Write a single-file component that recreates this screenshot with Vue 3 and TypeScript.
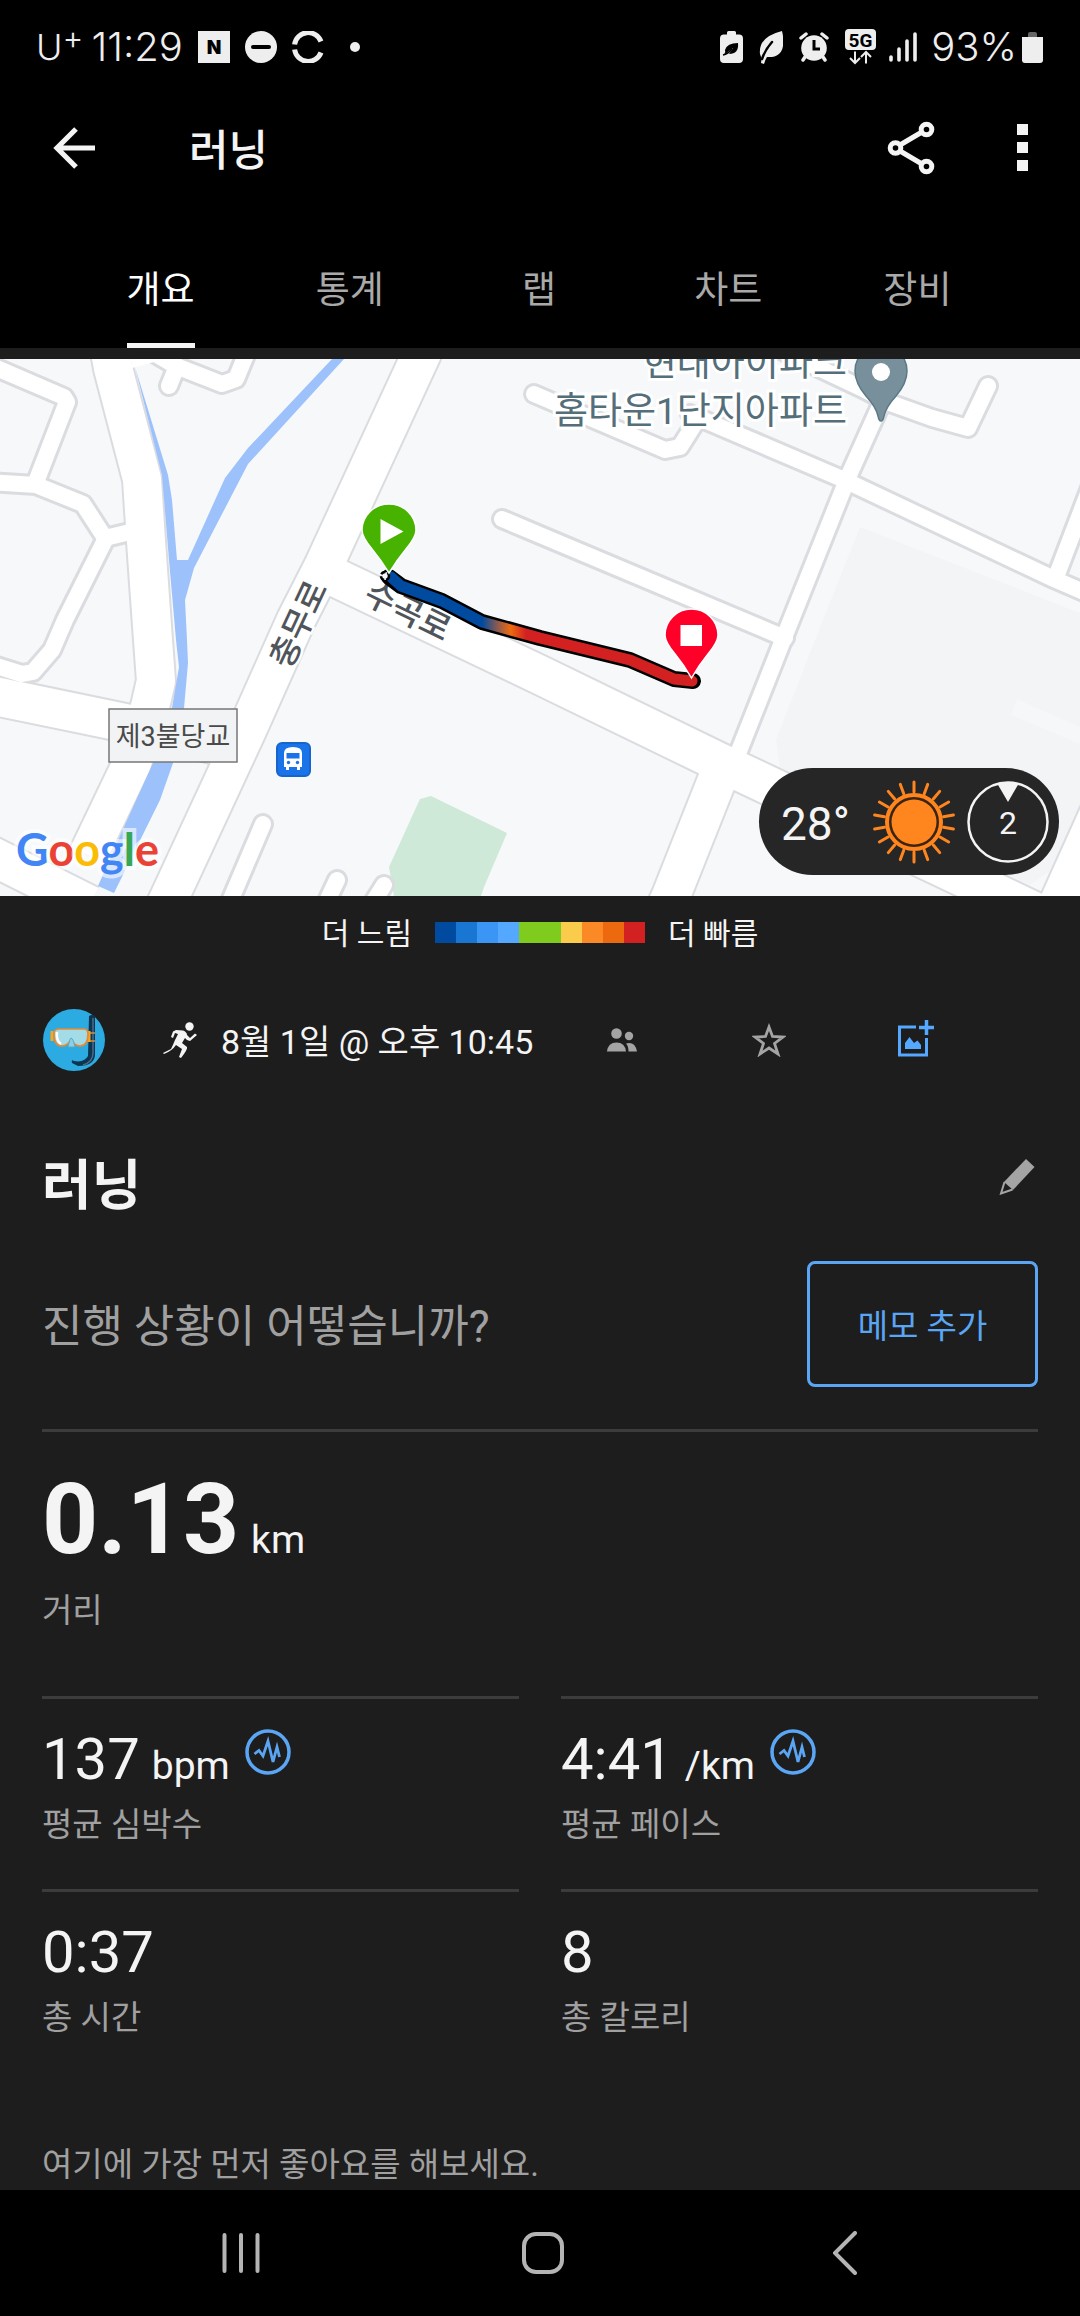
<script setup lang="ts">
import { ref } from 'vue'

interface Metric {
  value: string
  unit?: string
  label: string
  hasZones?: boolean
}

const tabs: string[] = ['개요', '통계', '랩', '차트', '장비']
const activeTab = ref<string>('개요')

const speedColors: string[] = [
  '#004a9f', '#1976d2', '#3b95f5', '#54a8ff', '#80cc1e',
  '#80cc1e', '#fbcb4b', '#fb8a26', '#ec690f', '#d32121',
]

const metrics: Metric[] = [
  { value: '137', unit: 'bpm', label: '평균 심박수', hasZones: true },
  { value: '4:41', unit: '/km', label: '평균 페이스', hasZones: true },
  { value: '0:37', label: '총 시간' },
  { value: '8', label: '총 칼로리' },
]

const sunRays: number[] = Array.from({ length: 18 }, (_, i) => i * 20)

const wideRoads: string[] = [
  'M107 335L113 368L142 479L146 541L153 640L156 681L150 707L132 763L88 855',
  'M-10 695L140 726L228 748',
  'M428 340L324 565L296 620L247 730L170 896L160 917',
  'M324 572L540 675L717 761L1000 895L1040 914',
  'M721 770L671 896L661 918',
  'M-20 850L0 860L90 905',
  'M1055 911L1100 811',
]

const narrowRoads: string[] = [
  'M737 756L783 640L849 475L885 395',
  'M770 345L861 388L890 403L932 418L968 428L988 386',
  'M534 394L665 450L680 447L697 420',
  'M690 414L840 478L1056 580L1100 599',
  'M1056 577L1092 483',
  'M502 519L540 535L785 638',
  'M-8 366L64 397L67 402L36 482',
  'M-10 482L36 485L83 504L105 538L130 532',
  'M105 540L65 620L52 650L33 672L22 674L-10 664',
  'M140 345L176 366L222 384L236 379L248 350',
  'M177 366L169 386',
  'M263 824L228 906',
  'M337 880L320 916',
  'M384 885L362 920',
]
</script>

<template>
  <div class="screen">
    <div class="status-bar">
      <div class="status-group">
        <span class="carrier">U<span class="carrier-plus">+</span></span>
        <span class="clock">11:29</span>
        <svg class="status-n" width="32" height="32" viewBox="0 0 32 32" aria-hidden="true">
          <rect width="32" height="32" fill="#eee" />
          <text x="16" y="23" text-anchor="middle" class="n-mark">N</text>
        </svg>
        <svg class="status-icon" width="32" height="32" viewBox="0 0 32 32" aria-hidden="true">
          <circle cx="16" cy="16" r="16" fill="#eee" />
          <path d="M8 16H24" stroke="#000" stroke-width="4" stroke-linecap="round" />
        </svg>
        <svg class="status-icon" width="32" height="32" viewBox="0 0 32 32" fill="none" stroke="#eee" stroke-width="5" aria-hidden="true">
          <path d="M2.6 13.5A13.7 13.7 0 0 1 29 10.5" />
          <path d="M2.6 18.5A13.7 13.7 0 0 0 29 21.5" />
        </svg>
        <span class="status-dot"></span>
      </div>
      <div class="status-group">
        <svg width="23" height="32" viewBox="0 0 23 32" aria-hidden="true">
          <path d="M7 1.500Q7 0 8.500 0H14.500Q16 0 16 1.500V3.500H19Q23 3.500 23 7.500V28Q23 32 19 32H4Q0 32 0 28V7.500Q0 3.500 4 3.500H7Z" fill="#eee" />
          <path d="M5 19Q7 12 18 12Q19 23 9 23L13 17L4 24Q6 21 5 19Z" fill="#000" />
          <path d="M3 24Q8 23 12 18" stroke="#000" stroke-width="1.500" fill="none" />
        </svg>
        <svg class="leaf" width="24" height="33" viewBox="0 0 24 33" aria-hidden="true">
          <path d="M23 0Q25 8 24 15Q22 27 8 26Q6 29 5 33L2 32Q3 27 1 23Q-1 6 23 0Z" fill="#eee" />
          <path d="M3 28Q6 19 13 11" stroke="#000" stroke-width="2.500" stroke-linecap="round" fill="none" />
        </svg>
        <svg class="alarm" width="30" height="30" viewBox="0 0 30 30" aria-hidden="true">
          <circle cx="15" cy="16" r="12.800" fill="#eee" />
          <path d="M2 6L7 2M28 6L23 2M6 25L4 28M24 25L26 28" stroke="#eee" stroke-width="3.500" stroke-linecap="round" />
          <path d="M15 8V17H21" stroke="#000" stroke-width="3" fill="none" />
        </svg>
        <svg class="five-g" width="31" height="36" viewBox="0 0 31 36" aria-hidden="true">
          <rect width="31" height="21" rx="4" fill="#eee" />
          <text x="15.500" y="17.500" text-anchor="middle" class="five-g-mark">5G</text>
          <path d="M10 22.500V34M5 29L10 34L15 29M21 34.500V23M16 28L21 23L26 28" stroke="#eee" stroke-width="2" fill="none" />
        </svg>
        <svg class="signal" width="29" height="30" viewBox="0 0 29 30" stroke="#eee" stroke-width="3.600" stroke-linecap="round" aria-hidden="true">
          <path d="M2 25V28M10 17V28M18 9V28M26 2V28" />
        </svg>
        <span class="battery-text">93%</span>
        <svg class="battery" width="21" height="31" viewBox="0 0 21 31" aria-hidden="true">
          <path d="M6 5V2Q6 0 8 0H13Q15 0 15 2V5Z" fill="#666" />
          <path d="M0 5H21V28Q21 31 18 31H3Q0 31 0 28Z" fill="#eee" />
        </svg>
      </div>
    </div>

    <header class="app-bar">
      <button class="icon-button" aria-label="뒤로">
        <svg width="42" height="42" viewBox="0 0 42 42" fill="none" stroke="#f4f4f4" stroke-width="5.200" aria-hidden="true">
          <path d="M42 21H4M23 2L4 21L23 40" />
        </svg>
      </button>
      <h1 class="app-title">러닝</h1>
      <button class="icon-button share-button" aria-label="공유">
        <svg width="48" height="54" viewBox="0 0 48 54" fill="none" stroke="#f4f4f4" stroke-width="5" aria-hidden="true">
          <circle cx="8.500" cy="27" r="5.300" />
          <circle cx="39.500" cy="8.500" r="5.300" />
          <circle cx="39.500" cy="45.500" r="5.300" />
          <path d="M13 24L35 11M13 30L35 43" />
        </svg>
      </button>
      <button class="icon-button" aria-label="더보기">
        <svg width="11" height="48" viewBox="0 0 11 48" fill="#f4f4f4" aria-hidden="true">
          <path d="M0 0H11V11H0ZM0 18H11V29H0ZM0 36H11V47H0Z" />
        </svg>
      </button>
    </header>

    <nav class="tabs">
      <button
        v-for="tab in tabs"
        :key="tab"
        class="tab"
        :class="{ active: tab === activeTab }"
        @click="activeTab = tab"
      >
        <span class="tab-label">{{ tab }}</span>
      </button>
    </nav>

    <main class="content">
      <section class="map">
        <svg class="map-canvas" viewBox="0 359 1080 537" role="img" aria-label="러닝 경로 지도">
          <defs>
            <linearGradient id="pace" gradientUnits="userSpaceOnUse" x1="482" y1="0" x2="526" y2="0">
              <stop offset="0" stop-color="#004a9f" />
              <stop offset="0.350" stop-color="#8a5a50" />
              <stop offset="0.650" stop-color="#ee6a10" />
              <stop offset="1" stop-color="#d32121" />
            </linearGradient>
          </defs>
          <rect x="0" y="359" width="1080" height="537" fill="#f6f8fa" />
          <path d="M860 527L1080 613V850L1030 885L780 768L776 740L815 640Z" fill="#f3f4f6" />
          <path d="M1017 699L1080 727V744L1011 715Z" fill="#f6f7f9" />
          <path d="M420 799L431 796L507 833L484 887L481 896H394L389 867Z" fill="#cee9d8" />

          <g fill="none" stroke="#dadce0" stroke-linejoin="round">
            <path v-for="d in wideRoads" :key="d" :d="d" stroke-width="42" />
            <path v-for="d in narrowRoads" :key="d" :d="d" stroke-width="22" stroke-linecap="round" />
          </g>
          <g fill="none" stroke="#fff" stroke-linejoin="round">
            <path v-for="d in wideRoads" :key="d" :d="d" stroke-width="38" />
            <path v-for="d in narrowRoads" :key="d" :d="d" stroke-width="16" stroke-linecap="round" />
          </g>
          <path d="M126 330L170 345L154 362L132 368Z" fill="#fff" />

          <path
            d="M135 367L162 475L169 560L176 640L179 667L172 708L153 763L124 827L98 886L114 893L160 800L173 763L184 708L188 663L187 640L185 600L194 568L248 464L344 359H332L248 448L225 478L188 560H177L172 500L168 475Z"
            fill="#9dc1fb"
          />

          <g class="road-name">
            <text transform="translate(298 624) rotate(-65)" text-anchor="middle" dy="12">충무로</text>
            <text transform="translate(408 611) rotate(26)" text-anchor="middle" dy="12">수곡로</text>
          </g>

          <g fill="none" stroke-linejoin="round">
            <path d="M389 577L401 586L442 601L482 622L540 638L630 660L674 679L693 681" stroke="#000" stroke-width="16" stroke-linecap="round" />
            <path d="M391 577L401 586L442 601L482 622L540 638L630 660L674 679L692 681" stroke="url(#pace)" stroke-width="11" stroke-linecap="round" />
            <circle cx="385" cy="576" r="4" stroke="#000" stroke-width="2.500" stroke-dasharray="5 2" fill="#f6f8fa" />
          </g>

          <g class="place-name">
            <text x="847" y="376" text-anchor="end">현대아이파크</text>
            <text x="847" y="424" text-anchor="end">홈타운1단지아파트</text>
          </g>
          <path d="M881 421Q879 421 878 416Q876 407 866 396Q855 383 855 371A26 26 0 0 1 907 371Q907 383 896 396Q886 407 884 416Q883 421 881 421Z" fill="#78909c" stroke="#5c7886" stroke-width="1.500" />
          <circle cx="881" cy="372" r="9" fill="#fff" />

          <path d="M389 573Q381 560 372 549Q362 537 362 530A27 26 0 0 1 416 530Q416 537 406 549Q397 560 389 573Z" fill="#48b200" stroke="#fff" stroke-width="1.500" />
          <path d="M380.500 519L403.500 531.500L380.500 544Z" fill="#fff" />
          <path d="M691.500 678Q684 665 675 654Q665 642 665 635A26.500 26 0 0 1 718 635Q718 642 708 654Q699 665 691.500 678Z" fill="#ff0029" stroke="#fff" stroke-width="1.500" />
          <rect x="680.500" y="625" width="21.500" height="21" fill="#fff" />

          <rect x="109" y="709" width="128" height="53" fill="#f1f3f5" stroke="#777" stroke-width="1.500" />
          <text x="173" y="746" text-anchor="middle" class="bridge-name">제3불당교</text>

          <rect x="277" y="743" width="33" height="33" rx="5" fill="#1a73e8" stroke="#1765cc" stroke-width="2" />
          <path d="M284 753Q284 747 293 747Q302 747 302 753V767H300V770H297V767H289V770H286V767H284Z" fill="#fff" />
          <path d="M286.500 753H299.500V758.500H286.500Z" fill="#1a73e8" />
          <circle cx="288.500" cy="762.500" r="1.700" fill="#1a73e8" />
          <circle cx="297.500" cy="762.500" r="1.700" fill="#1a73e8" />

          <text x="16" y="866" class="map-brand"><tspan fill="#4285f4">G</tspan><tspan fill="#ea4335">o</tspan><tspan fill="#fbbc05">o</tspan><tspan fill="#4285f4">g</tspan><tspan fill="#34a853">l</tspan><tspan fill="#ea4335">e</tspan></text>
        </svg>

        <div class="weather">
          <span class="temperature">28°</span>
          <svg class="sun" width="84" height="86" viewBox="-42 -43 84 86" aria-hidden="true">
            <g stroke="#ff861f" stroke-width="3" stroke-linecap="round">
              <path v-for="angle in sunRays" :key="angle" d="M0 -30V-40" :transform="`rotate(${angle})`" />
            </g>
            <circle r="27" fill="#3b2410" stroke="#ff861f" stroke-width="4" />
            <circle r="22.500" fill="#ff861f" />
          </svg>
          <svg width="82" height="82" viewBox="-41 -41 82 82" aria-hidden="true">
            <circle r="39.500" fill="none" stroke="#f4f4f4" stroke-width="2.500" />
            <path d="M-10.500 -38Q0 -41 10.500 -38L0 -20Z" fill="#f4f4f4" />
            <text y="12" text-anchor="middle" class="wind-speed">2</text>
          </svg>
        </div>
      </section>

      <div class="legend">
        <span class="legend-text">더 느림</span>
        <div class="legend-scale">
          <span v-for="(color, i) in speedColors" :key="i" class="legend-step" :style="{ background: color }"></span>
        </div>
        <span class="legend-text">더 빠름</span>
      </div>

      <div class="activity-meta">
        <svg class="avatar" width="64" height="64" viewBox="0 0 64 64" aria-hidden="true">
          <circle cx="32" cy="32" r="31" fill="#2cabe2" />
          <path d="M47 8Q50 6 53 8V46Q53 58 36 58L30 55Q29 51 32 53Q42 55 46 48Z" fill="#0d3552" />
          <path d="M51 10V45Q51 54 41 57" stroke="#4c6b85" stroke-width="1.500" fill="none" />
          <path d="M46 25H53M46 33H53" stroke="#d98c38" stroke-width="1.500" />
          <path d="M10 23V33M47 23V34" stroke="#f6a823" stroke-width="3" />
          <path d="M17 21H42Q46 21 46 26Q46 38 38 38Q33 38 29 32Q25 38 20 38Q12 38 12 26Q12 21 17 21Z" fill="#a3dbe6" stroke="#e48a36" stroke-width="1.700" />
          <path d="M15 24Q14 33 19 36" stroke="#fff" stroke-width="2.500" fill="none" />
          <path d="M26 39Q28 30 29 30Q31 30 33 39Z" fill="#8ed0df" stroke="#55a9cc" />
        </svg>
        <svg class="runner" width="34" height="36" viewBox="0 0 34 36" aria-hidden="true">
          <circle cx="26.500" cy="4.500" r="4.200" fill="#f4f4f4" />
          <path d="M13 8L20 8.500Q24 10 24 13L27 16L32 11.500L34 13L27 19Q24 19 22 16L19 21L24 25Q25 27 18 36L16 35L19 27L13 23Q9 29 1 32L0 31L8 27Q10 23 12 18L15 12L12 11L10 16L8 15L10 9.500Z" fill="#f4f4f4" />
        </svg>
        <time class="date">8월 1일 @ 오후 10:45</time>
        <button class="meta-button" aria-label="공개 범위">
          <svg width="30" height="24" viewBox="0 0 30 24" fill="#a4a4a4" aria-hidden="true">
            <circle cx="9.500" cy="5.500" r="5.300" />
            <circle cx="22" cy="8" r="4.200" />
            <path d="M0 23.500Q1 14.500 9.500 14.500Q18 14.500 19 23.500Z" />
            <path d="M19 15.500Q28 13 30 23.500H21.500Q21.500 18 19 15.500Z" />
          </svg>
        </button>
        <button class="meta-button" aria-label="즐겨찾기">
          <svg width="34" height="34" viewBox="0 0 34 34" aria-hidden="true">
            <path d="M17 4L20.500 13.500L31 14L22.500 20.500L26 31L17 25L8 31L11.500 20.500L3 14L13.500 13.500Z" fill="none" stroke="#a4a4a4" stroke-width="2.800" />
          </svg>
        </button>
        <button class="meta-button photo-button" aria-label="사진 추가">
          <svg width="36" height="37" viewBox="0 0 36 37" fill="none" stroke="#54a8ff" aria-hidden="true">
            <path d="M18 7H1.500V35H28.500V18" stroke-width="3" />
            <path d="M28.500 0V15M21 7.500H36" stroke-width="3.500" />
            <path d="M7 29V23L11.500 17L16 23L19.500 20.500L23 25V29Z" fill="#54a8ff" stroke="none" />
          </svg>
        </button>
      </div>

      <div class="padded">
        <div class="title-row">
          <h2 class="activity-title">러닝</h2>
          <button class="edit-button" aria-label="제목 편집">
            <svg width="36" height="36" viewBox="0 0 36 36" aria-hidden="true">
              <path d="M27 0L35.500 8L14 31L5 23Z" fill="#a4a4a4" />
              <path d="M5.500 23L2 34.500L13.500 30.500" fill="none" stroke="#a4a4a4" stroke-width="2" />
            </svg>
          </button>
        </div>

        <div class="memo-row">
          <p class="memo-prompt">진행 상황이 어떻습니까?</p>
          <button class="memo-button">메모 추가</button>
        </div>

        <section class="distance">
          <div class="reading">
            <span class="distance-value">0.13</span>
            <span class="unit">km</span>
          </div>
          <div class="caption distance-caption">거리</div>
        </section>

        <section class="metrics">
          <div v-for="metric in metrics" :key="metric.label" class="metric">
            <div class="reading">
              <span class="metric-value">{{ metric.value }}</span>
              <span v-if="metric.unit" class="unit">{{ metric.unit }}</span>
              <svg v-if="metric.hasZones" class="zones" width="46" height="46" viewBox="0 0 46 46" fill="none" stroke="#5aa6f5" aria-hidden="true">
                <circle cx="23" cy="23" r="21" stroke-width="3.500" />
                <path d="M9.500 25L14 21.500L18 27L23 12L28 33L32 18L34.500 28" stroke-width="2.800" />
              </svg>
            </div>
            <div class="caption">{{ metric.label }}</div>
          </div>
        </section>

        <p class="likes">여기에 가장 먼저 좋아요를 해보세요.</p>
      </div>
    </main>

    <nav class="system-nav">
      <button aria-label="최근 앱">
        <svg width="40" height="42" viewBox="0 0 40 42" stroke="#b4b4b4" stroke-width="4" stroke-linecap="round" aria-hidden="true">
          <path d="M3.500 3V39M20 3V39M36.500 3V39" />
        </svg>
      </button>
      <button aria-label="홈">
        <svg width="42" height="42" viewBox="0 0 42 42" fill="none" stroke="#b4b4b4" stroke-width="4" aria-hidden="true">
          <rect x="2" y="2" width="38" height="38" rx="12" />
        </svg>
      </button>
      <button aria-label="이전">
        <svg width="24" height="44" viewBox="0 0 24 44" fill="none" stroke="#b4b4b4" stroke-width="4" stroke-linecap="round" aria-hidden="true">
          <path d="M22 2L2 22L22 42" />
        </svg>
      </button>
    </nav>
  </div>
</template>

<style>
body {
  margin: 0;
  background: #000;
}
</style>

<style scoped>
.screen {
  display: flex;
  flex-direction: column;
  min-height: 100vh;
  background: #000;
  color: #f4f4f4;
  font-family: Roboto, "Noto Sans CJK KR", sans-serif;
}

.screen svg {
  display: block;
  flex: none;
}

button {
  margin: 0;
  padding: 0;
  border: 0;
  background: none;
  color: inherit;
  font: inherit;
  cursor: pointer;
}

h1,
h2,
p {
  margin: 0;
}

.status-bar {
  display: flex;
  align-items: center;
  justify-content: space-between;
  height: 94px;
  padding: 0 37px 0 36px;
  color: #eee;
  font-family: Inter, sans-serif;
}

.status-group {
  display: flex;
  align-items: center;
}

.carrier {
  display: flex;
  font-size: 36px;
  font-weight: 300;
  line-height: 46px;
}

.carrier-plus {
  font-size: 32px;
  line-height: 28px;
}

.clock,
.battery-text {
  font-size: 40px;
  font-weight: 300;
  line-height: 44px;
}

.clock {
  margin-left: 8px;
}

.status-n,
.status-icon {
  margin-left: 15px;
}

.n-mark {
  font: 900 19px Inter, sans-serif;
}

.status-dot {
  width: 10px;
  height: 10px;
  margin-left: 26px;
  border-radius: 50%;
  background: #eee;
}

.leaf,
.alarm,
.five-g {
  margin-left: 16px;
}

.five-g-mark {
  font: 700 19px Roboto, sans-serif;
}

.signal {
  margin: 0 13px;
}

.battery {
  margin-left: 5px;
}

.app-bar {
  display: flex;
  align-items: center;
  height: 108px;
  padding: 0 52px 26px 53px;
}

.app-title {
  flex: 1;
  margin-left: 94px;
  padding-top: 6px;
  font-size: 43px;
  font-weight: 500;
  line-height: 52px;
}

.share-button {
  margin-right: 82px;
}

.tabs {
  display: flex;
  padding: 0 68px 0 66px;
}

.tab {
  display: flex;
  flex: 1;
  justify-content: center;
  color: #a9a9a9;
  font-size: 37px;
}

.tab-label {
  box-sizing: border-box;
  height: 120px;
  border-bottom: 5px solid transparent;
  line-height: 126px;
}

.tab.active {
  color: #fff;
}

.tab.active .tab-label {
  border-color: #f4f4f4;
}

.content {
  flex: 1;
  padding-top: 11px;
  background: #1d1d1d;
}

.map {
  position: relative;
}

.map-canvas {
  width: 100%;
}

.road-name text {
  font-size: 33px;
  font-weight: 500;
  fill: #4f555b;
  stroke: #fff;
  stroke-width: 5px;
  paint-order: stroke;
}

.place-name text {
  font-size: 37px;
  fill: #546e7a;
  stroke: #fff;
  stroke-width: 6px;
  paint-order: stroke;
}

.bridge-name {
  font-size: 27px;
  fill: #4a4a4a;
}

.map-brand {
  font-family: Lato, sans-serif;
  font-size: 45px;
  font-weight: 700;
  stroke: #fff;
  stroke-opacity: 0.6;
  stroke-width: 8px;
  paint-order: stroke;
}

.weather {
  position: absolute;
  right: 21px;
  bottom: 21px;
  display: flex;
  align-items: center;
  box-sizing: border-box;
  width: 300px;
  height: 107px;
  padding: 0 10px 0 22px;
  border-radius: 54px;
  background: #262626;
}

.temperature {
  padding-top: 4px;
  font-size: 46px;
  line-height: 54px;
}

.sun {
  margin: 0 11px 0 auto;
}

.wind-speed {
  font-size: 32px;
  fill: #f4f4f4;
}

.legend {
  display: flex;
  align-items: center;
  justify-content: center;
  gap: 23px;
  height: 72px;
  font-size: 30px;
  line-height: 40px;
}

.legend-text {
  padding-top: 4px;
}

.legend-scale {
  display: flex;
}

.legend-step {
  width: 21px;
  height: 21px;
}

.activity-meta {
  display: flex;
  align-items: center;
  height: 144px;
  padding: 0 91px 0 42px;
}

.runner {
  margin-left: 57px;
}

.date {
  flex: 1;
  margin-left: 24px;
  padding-top: 4px;
  font-size: 34px;
  line-height: 40px;
  white-space: nowrap;
}

.meta-button {
  display: flex;
  justify-content: center;
  width: 147px;
}

.photo-button {
  padding-bottom: 4px;
}

.padded {
  padding: 0 42px 5px;
}

.title-row {
  display: flex;
  align-items: center;
  justify-content: space-between;
  height: 149px;
}

.activity-title {
  font-size: 54px;
  font-weight: 700;
  line-height: 64px;
}

.edit-button {
  padding: 0 3px 20px 0;
}

.memo-row {
  display: flex;
  align-items: center;
  justify-content: space-between;
}

.memo-prompt {
  padding-top: 6px;
  color: #a0a0a0;
  font-size: 44px;
  line-height: 52px;
}

.memo-button {
  box-sizing: border-box;
  width: 231px;
  height: 126px;
  padding-top: 6px;
  border: 3px solid #5aa6f5;
  border-radius: 8px;
  color: #5aa6f5;
  font-size: 33px;
  line-height: 40px;
}

.distance {
  margin-top: 42px;
  padding: 38px 0 65px;
  border-top: 3px solid #3c3c3c;
}

.reading {
  display: flex;
  align-items: baseline;
}

.distance-value {
  font-size: 98px;
  font-weight: 700;
  line-height: 100px;
}

.unit {
  margin-left: 12px;
  font-size: 39px;
  line-height: 40px;
}

.caption {
  margin-top: 16px;
  color: #a0a0a0;
  font-size: 33px;
  line-height: 40px;
}

.distance-caption {
  margin-top: 21px;
}

.metrics {
  display: grid;
  grid-template-columns: 1fr 1fr;
  column-gap: 42px;
}

.metric {
  padding: 30px 0 44px;
  border-top: 3px solid #3c3c3c;
}

.metric-value {
  font-size: 58px;
  line-height: 60px;
}

.zones {
  align-self: flex-start;
  margin-left: 15px;
}

.likes {
  margin-top: 63px;
  color: #a0a0a0;
  font-size: 33px;
  line-height: 40px;
}

.system-nav {
  display: flex;
  height: 126px;
  padding: 0 84px 0 90px;
}

.system-nav button {
  display: flex;
  flex: 1;
  align-items: center;
  justify-content: center;
}
</style>
